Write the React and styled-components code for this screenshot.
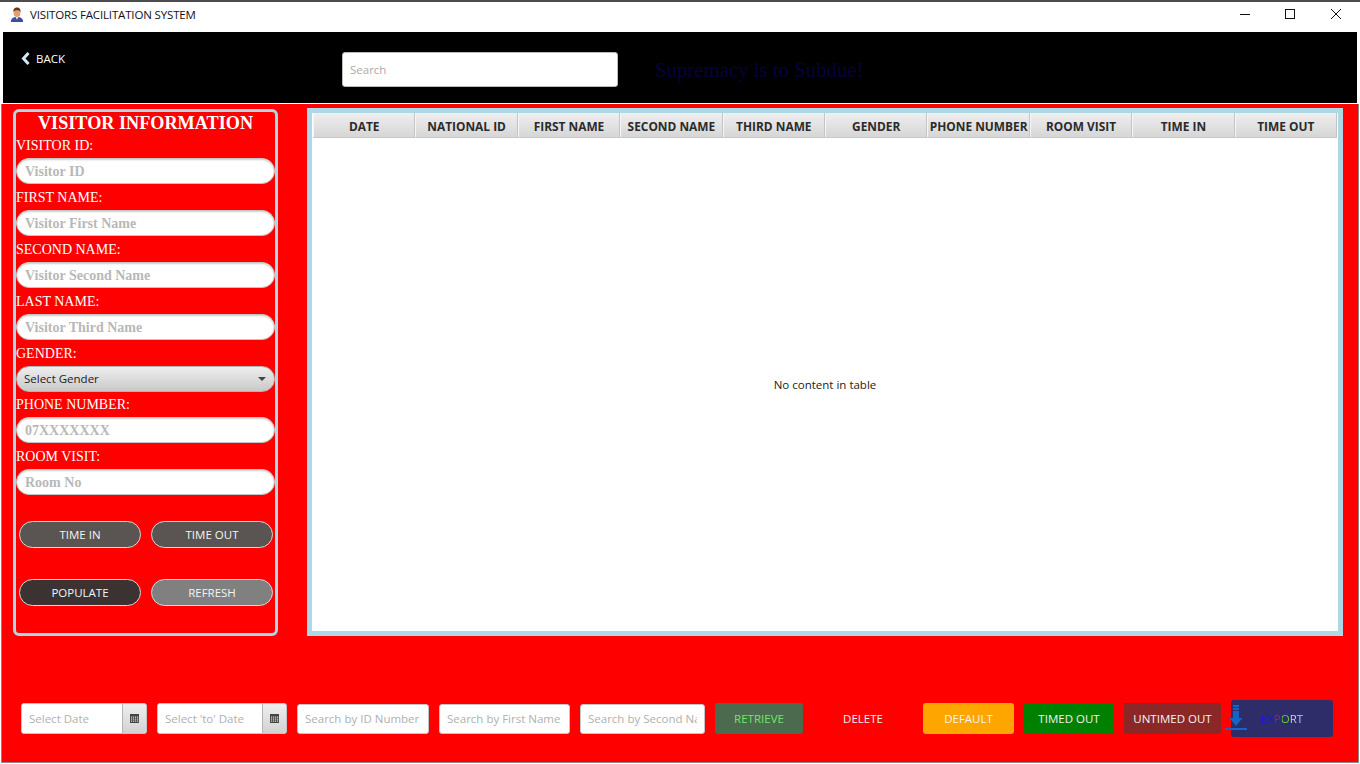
import React from "react";
import styled, { createGlobalStyle } from "styled-components";

const UI_FONT = `"Open Sans", "Noto Sans", sans-serif`;
const SERIF_FONT = `"Liberation Serif", serif`;
const COLUMNS = ["DATE", "NATIONAL ID", "FIRST NAME", "SECOND NAME", "THIRD NAME", "GENDER", "PHONE NUMBER", "ROOM VISIT", "TIME IN", "TIME OUT"];

const Global = createGlobalStyle`
  html, body { margin: 0; padding: 0; background: #fff; }
  * { box-sizing: border-box; }
`;

const Window = styled.div`
  width: 1360px;
  height: 764px;
  display: flex;
  flex-direction: column;
  background: #fff;
  border-top: 2px solid #4c4c4c;
  font-family: ${UI_FONT};
  overflow: hidden;
`;

const TitleBar = styled.div`
  height: 30px;
  flex: none;
  display: flex;
  align-items: center;
  padding: 0 1px 6px 10px;
  color: #111;
  font-size: 11.5px;
`;

const AppName = styled.span`
  margin-left: 6px;
  letter-spacing: -0.15px;
`;

const WinButtons = styled.div`
  margin-left: auto;
  display: flex;
`;

const WinButton = styled.div`
  width: 46px;
  display: flex;
  align-items: center;
  justify-content: center;
`;

const TopBar = styled.div`
  height: 71px;
  flex: none;
  margin: 0 3px;
  background: #000;
  display: flex;
  align-items: flex-start;
  padding-left: 18px;
`;

const BackLink = styled.div`
  width: 321px;
  margin-top: 19px;
  display: flex;
  align-items: center;
  gap: 6px;
  color: #fff;
  font-size: 11.5px;
`;

const SearchBox = styled.input`
  width: 276px;
  height: 35px;
  margin-top: 20px;
  padding: 0 7px;
  background: #fff;
  border: 1px solid #bbb;
  border-radius: 3px;
  font: 11.5px ${UI_FONT};
  outline: none;
  &::placeholder { color: #aaa; }
`;

const Motto = styled.div`
  margin: 26px 0 0 37px;
  color: #07003c;
  font-family: ${SERIF_FONT};
  font-size: 20.8px;
`;

const Main = styled.div`
  flex: 1;
  margin: 1px 1px 1px;
  background: #f00;
  border: 1px solid #8a8a8a;
  border-top: 0;
  display: flex;
  flex-direction: column;
`;

const Content = styled.div`
  display: flex;
  align-items: flex-start;
  padding: 4px 15px 0 11px;
  gap: 29px;
`;

const Panel = styled.div`
  width: 265px;
  height: 527px;
  margin-top: 1px;
  flex: none;
  border: 3px solid #add8e6;
  border-radius: 6px;
  display: flex;
  flex-direction: column;
`;

const PanelTitle = styled.div`
  height: 21px;
  text-align: center;
  color: #fff;
  font: bold 18.2px/23px ${SERIF_FONT};
  white-space: nowrap;
`;

const FieldLabel = styled.div`
  height: 25px;
  line-height: 26px;
  color: #fff;
  font-family: ${SERIF_FONT};
  font-size: 14px;
  white-space: nowrap;
`;

const PillInput = styled.input`
  display: block;
  width: 259px;
  height: 26px;
  flex: none;
  margin-bottom: ${(p) => p.$mb ?? 1}px;
  padding: 2px 8px 0;
  background: #fff;
  border: 1px solid #c4c4c4;
  border-radius: 13px;
  box-shadow: inset 0 1px 2px #ccc;
  font: bold 14px ${SERIF_FONT};
  outline: none;
  &::placeholder { color: #b8b8b8; opacity: 1; }
`;

const GenderSelect = styled.div`
  width: 259px;
  height: 26px;
  flex: none;
  display: flex;
  align-items: center;
  justify-content: space-between;
  padding: 0 8px 2px 7px;
  border: 1px solid #b4b4b4;
  border-radius: 13px;
  background: linear-gradient(#eee, #c9c9c9);
  color: #222;
  font-size: 11.5px;
`;

const Caret = styled.span`
  width: 0;
  height: 0;
  margin-top: 2px;
  border-left: 4px solid transparent;
  border-right: 4px solid transparent;
  border-top: 4px solid #444;
`;

const ButtonRow = styled.div`
  display: flex;
  gap: 10px;
  padding-left: 3px;
  margin-top: ${(p) => p.$top}px;
`;

const PillButton = styled.div`
  width: 122px;
  height: 27px;
  display: flex;
  align-items: center;
  justify-content: center;
  border: 1.5px solid #d8d8d8;
  border-radius: 14px;
  background: ${(p) => p.$bg};
  color: #f4f4f4;
  font-size: 11.5px;
`;

const TableFrame = styled.div`
  width: 1036px;
  height: 528px;
  flex: none;
  border: 5px solid #add8e6;
  background: #fff;
  display: flex;
  flex-direction: column;
`;

const TableHead = styled.div`
  height: 25px;
  margin-left: 1px;
  flex: none;
  display: grid;
  grid-template-columns: repeat(10, 1fr);
  width: 1024px;
  background: linear-gradient(#efefef, #d6d6d6);
  border-bottom: 1px solid #c8c8c8;
`;

const HeadCell = styled.div`
  display: flex;
  align-items: center;
  justify-content: center;
  padding-top: 2px;
  border-right: 1px solid #c4c4c4;
  border-left: 1px solid #f6f6f6;
  color: #2b2b2b;
  font-size: 11.9px;
  font-weight: 700;
  white-space: nowrap;
  overflow: hidden;
`;

const TableEmpty = styled.div`
  flex: 1;
  display: flex;
  align-items: center;
  justify-content: center;
  color: #222;
  font-size: 11.5px;
  padding-bottom: 1px;
`;

const FilterRow = styled.div`
  display: flex;
  align-items: center;
  margin-top: 64px;
  padding-left: 19px;
  gap: 10px;
  height: 37px;
`;

const DateGroup = styled.div`
  width: ${(p) => p.$w}px;
  height: 31px;
  display: flex;
  flex: none;
  background: #fff;
  border: 1px solid #c4c4c4;
  border-radius: 3px;
  overflow: hidden;
`;

const DateInput = styled.input`
  flex: 1;
  min-width: 0;
  border: 0;
  padding: 0 7px;
  font: 11.5px ${UI_FONT};
  outline: none;
  &::placeholder { color: #b0b0b0; opacity: 1; }
`;

const CalendarButton = styled.div`
  width: 24px;
  flex: none;
  display: flex;
  align-items: center;
  justify-content: center;
  border-left: 1px solid #b4b4b4;
  background: linear-gradient(#efefef, #d2d2d2);
`;

const FilterInput = styled.input`
  width: ${(p) => p.$w}px;
  height: 30px;
  flex: none;
  padding: 0 7px;
  background: #fff;
  border: 1px solid #c4c4c4;
  border-radius: 3px;
  font: 11.5px ${UI_FONT};
  outline: none;
  &::placeholder { color: #b0b0b0; opacity: 1; }
`;

const ActionButton = styled.div`
  width: ${(p) => p.$w}px;
  height: 31px;
  flex: none;
  display: flex;
  align-items: center;
  justify-content: center;
  border-radius: 3px;
  background: ${(p) => p.$bg};
  color: ${(p) => p.$fg || "#f4f4f4"};
  font-size: 11.5px;
`;

const ExportButton = styled.div`
  position: relative;
  width: 102px;
  height: 37px;
  flex: none;
  display: flex;
  align-items: center;
  justify-content: center;
  border-radius: 3px;
  background: #2f2d69;
  font-size: 11.5px;
`;

const ExportLabel = styled.span`
  background: linear-gradient(90deg, #1414f0 0 34%, #c01050 34% 50%, #58dc30 50% 68%, #cfcfe0 68% 100%);
  -webkit-background-clip: text;
  background-clip: text;
  color: transparent;
`;

const ExportIcon = styled.svg`
  position: absolute;
  left: -6px;
  top: 5px;
`;

const AvatarIcon = styled.svg`
  margin-top: 1px;
`;

const Avatar = () => (
  <AvatarIcon width="14" height="15" viewBox="0 0 14 16">
    <path d="M0.5 16 C0.5 12 3 10.6 7 10.6 C11 10.6 13.5 12 13.5 16 Z" fill="#3a4ea8" />
    <path d="M5.4 10.6 L7 13.5 L8.6 10.6 Z" fill="#e8e8e8" />
    <ellipse cx="7" cy="6" rx="3.6" ry="4.6" fill="#e0a070" />
    <path d="M3.2 5.4 C3 1.6 5 0.6 7 0.6 C9 0.6 11 1.6 10.8 5.4 C10 3.8 9 3.4 7 3.4 C5 3.4 4 3.8 3.2 5.4 Z" fill="#5c3a1e" />
  </AvatarIcon>
);

const Calendar = () => (
  <svg width="9" height="9" viewBox="0 0 9 9">
    <rect width="9" height="9" fill="#444" />
    <g fill="#ddd">
      {[2.5, 4.5, 6.5].map((y) =>
        [1, 3, 5, 7].map((x) => <rect key={`${x}-${y}`} x={x} y={y} width="1.2" height="1.2" />)
      )}
    </g>
  </svg>
);

const Field = ({ label, placeholder, $mb }) => (
  <>
    <FieldLabel>{label}</FieldLabel>
    <PillInput placeholder={placeholder} $mb={$mb} />
  </>
);

export default function App() {
  return (
    <Window>
      <Global />
      <TitleBar>
        <Avatar />
        <AppName>VISITORS FACILITATION SYSTEM</AppName>
        <WinButtons>
          <WinButton>
            <svg width="12" height="10"><path d="M2 5.5 H12" stroke="#111" strokeWidth="1" /></svg>
          </WinButton>
          <WinButton>
            <svg width="10" height="10"><rect x="0.5" y="0.5" width="9" height="9" fill="none" stroke="#111" /></svg>
          </WinButton>
          <WinButton>
            <svg width="10" height="10"><path d="M0 0 L10 10 M10 0 L0 10" stroke="#111" /></svg>
          </WinButton>
        </WinButtons>
      </TitleBar>
      <TopBar>
        <BackLink>
          <svg width="9" height="13" viewBox="0 0 9 13"><path d="M7.5 1 L2.5 6.5 L7.5 12" fill="none" stroke="#d5e8f5" strokeWidth="3" /></svg>
          BACK
        </BackLink>
        <SearchBox placeholder="Search" />
        <Motto>Supremacy is to Subdue!</Motto>
      </TopBar>
      <Main>
        <Content>
          <Panel>
            <PanelTitle>VISITOR INFORMATION</PanelTitle>
            <Field label="VISITOR ID:" placeholder="Visitor ID" />
            <Field label="FIRST NAME:" placeholder="Visitor First Name" />
            <Field label="SECOND NAME:" placeholder="Visitor Second Name" />
            <Field label="LAST NAME:" placeholder="Visitor Third Name" />
            <FieldLabel>GENDER:</FieldLabel>
            <GenderSelect>Select Gender<Caret /></GenderSelect>
            <Field label="PHONE NUMBER:" placeholder="07XXXXXXX" />
            <Field label="ROOM VISIT:" placeholder="Room No" $mb={0} />
            <ButtonRow $top={26}>
              <PillButton $bg="#5a5553">TIME IN</PillButton>
              <PillButton $bg="#5a5553">TIME OUT</PillButton>
            </ButtonRow>
            <ButtonRow $top={31}>
              <PillButton $bg="#3c3232">POPULATE</PillButton>
              <PillButton $bg="#808080">REFRESH</PillButton>
            </ButtonRow>
          </Panel>
          <TableFrame>
            <TableHead>
              {COLUMNS.map((c) => <HeadCell key={c}>{c}</HeadCell>)}
            </TableHead>
            <TableEmpty>No content in table</TableEmpty>
          </TableFrame>
        </Content>
        <FilterRow>
          <DateGroup $w={126}><DateInput placeholder="Select Date" /><CalendarButton><Calendar /></CalendarButton></DateGroup>
          <DateGroup $w={130}><DateInput placeholder="Select 'to' Date" /><CalendarButton><Calendar /></CalendarButton></DateGroup>
          <FilterInput $w={132} placeholder="Search by ID Number" />
          <FilterInput $w={131} placeholder="Search by First Name" />
          <FilterInput $w={125} placeholder="Search by Second Name" />
          <ActionButton $w={88} $bg="#4b6a4e" $fg="#6fe86f">RETRIEVE</ActionButton>
          <ActionButton $w={100} $bg="#f00">DELETE</ActionButton>
          <ActionButton $w={91} $bg="#ffa500">DEFAULT</ActionButton>
          <ActionButton $w={90} $bg="#008000">TIMED OUT</ActionButton>
          <ActionButton $w={97} $bg="#8b2727">UNTIMED OUT</ActionButton>
          <ExportButton>
            <ExportLabel>EXPORT</ExportLabel>
            <ExportIcon width="22" height="25" viewBox="0 0 22 25">
              <path d="M8 0 H14 V2 H8 Z M8 3 H14 V5 H8 Z M8 6 H14 V13 H17.5 L11 21 L4.5 13 H8 Z" fill="#1565c8" />
              <rect x="0" y="23" width="22" height="2" fill="#1565c8" />
            </ExportIcon>
          </ExportButton>
        </FilterRow>
      </Main>
    </Window>
  );
}
